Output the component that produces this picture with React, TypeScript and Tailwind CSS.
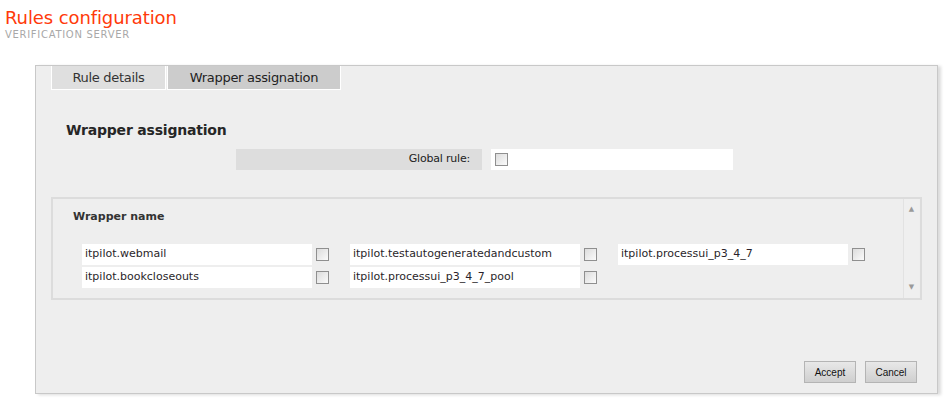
import React from 'react';

const wrappers = [
  'itpilot.webmail',
  'itpilot.testautogeneratedandcustom',
  'itpilot.processui_p3_4_7',
  'itpilot.bookcloseouts',
  'itpilot.processui_p3_4_7_pool',
];

// old-style grey checkbox
const Check = () => (
  <span className="block w-[13px] h-[13px] border border-[#8f8f8f] bg-gradient-to-br from-[#dcdcdc] to-[#fbfbfb] shrink-0" />
);

const WrapperItem = ({ name }: { name: string }) => (
  <div className="flex items-center w-[268px] h-[21px]">
    <div className="w-[230px] h-[21px] bg-white flex items-center pl-[3px] text-[11px] text-[#2a1f2a]">
      {name}
    </div>
    <div className="ml-[4px] flex">
      <Check />
    </div>
  </div>
);

const App = () => {
  return (
    <div className="w-[947px] h-[405px] bg-white overflow-hidden font-['DejaVu_Sans',sans-serif]">
      {/* header */}
      <div className="pl-[5px] pt-[7px]">
        <h1 className="text-[18px] leading-[22px] text-[#ff3a0a] tracking-[-0.1px]">Rules configuration</h1>
        <p className="text-[10px] leading-[10px] mt-[1px] text-[#a8a8a8] tracking-[0.7px]">VERIFICATION SERVER</p>
      </div>

      {/* main panel */}
      <div className="ml-[35px] mt-[25px] w-[903px] h-[329px] border border-[#c8c8c8] bg-[#eeeeee] shadow-[3px_1px_3px_#dcdcdc] flex flex-col">
        {/* tabs */}
        <div className="flex pl-[15px]">
          <div className="w-[115px] h-[24px] bg-[#dfdfdf] border border-t-0 border-white flex items-center justify-center text-[13px] text-[#333] tracking-[-0.3px]">
            Rule details
          </div>
          <div className="w-[174px] h-[24px] ml-px bg-[#cccccc] border border-t-0 border-white flex items-center justify-center text-[13px] text-[#222] tracking-[-0.3px]">
            Wrapper assignation
          </div>
        </div>

        <h2 className="mt-[31px] ml-[30px] text-[14px] leading-[18px] font-bold text-[#262626] tracking-[-0.2px]">
          Wrapper assignation
        </h2>

        {/* global rule */}
        <div className="flex mt-[10px] ml-[200px]">
          <div className="w-[246px] h-[21px] bg-[#dddddd] flex items-center justify-end pr-[12px] text-[11px] text-[#222] tracking-[-0.2px]">
            Global rule:
          </div>
          <div className="w-[242px] h-[21px] ml-[9px] bg-white flex items-center pl-[4px]">
            <Check />
          </div>
        </div>

        {/* wrapper list */}
        <div className="mt-[27px] ml-[15px] w-[871px] h-[103px] border-2 border-[#dcdcdc] flex">
          <div className="flex-1 pl-[20px] pt-[11px]">
            <div className="text-[11px] leading-[14px] font-bold text-[#333]">Wrapper name</div>
            <div className="mt-[20px] ml-[9px] flex flex-wrap gap-y-[2px] w-[810px]">
              {wrappers.map((w) => (
                <WrapperItem key={w} name={w} />
              ))}
            </div>
          </div>
          <div className="w-[16px] mr-[1px] border-l border-[#e2e2e2] bg-[#efefef] flex flex-col justify-between items-center py-[7px] text-[7px] leading-[7px] text-[#9a9a9a]">
            <span>▲</span>
            <span>▼</span>
          </div>
        </div>

        {/* buttons */}
        <div className="mt-auto mb-[10px] mr-[20px] flex justify-end gap-[9px] font-['Liberation_Sans',sans-serif]">
          <button className="w-[52px] h-[22px] border border-[#b4b4b4] bg-gradient-to-b from-[#e8e8e8] to-[#cfcfcf] text-[10px] text-[#111]">
            Accept
          </button>
          <button className="w-[52px] h-[22px] border border-[#b4b4b4] bg-gradient-to-b from-[#e8e8e8] to-[#cfcfcf] text-[10px] text-[#111]">
            Cancel
          </button>
        </div>
      </div>
    </div>
  );
};

export default App;
